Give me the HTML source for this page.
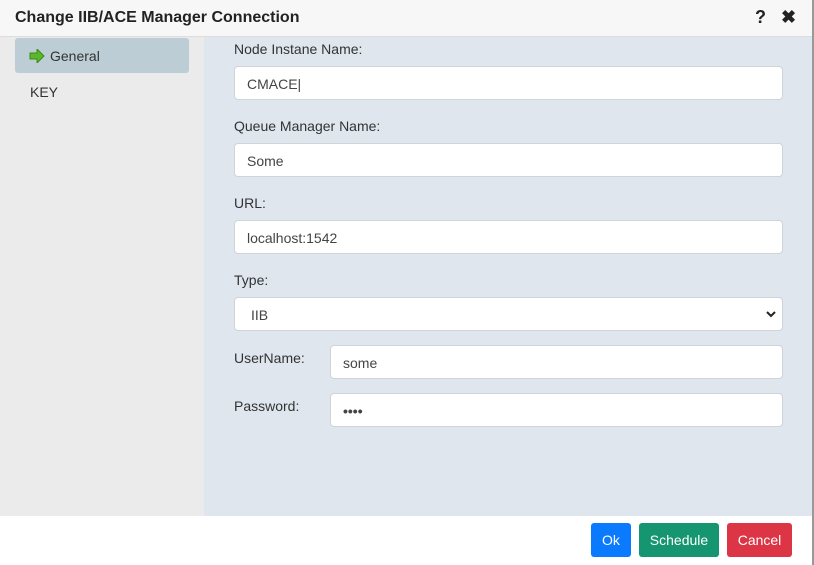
<!DOCTYPE html>
<html><head><style>
*{box-sizing:border-box;margin:0;padding:0}
body{width:814px;height:565px;background:#fff;font-family:"Liberation Sans",sans-serif;position:relative;overflow:hidden;font-size:14px;color:#333}
.hdr{position:absolute;left:0;top:0;width:814px;height:37px;background:#f7f7f7;border-bottom:1px solid #ddd}
.hdr .t{position:absolute;left:15px;top:9px;font-weight:bold;font-size:16px;color:#222}
.hdr .q{position:absolute;left:755px;top:7px;font-weight:bold;font-size:18px;color:#222}
.hdr .x{position:absolute;left:781px;top:7px;font-weight:bold;font-size:18px;color:#222}
.side{position:absolute;left:0;top:37px;width:204px;height:479px;background:#ebebeb}
.sel{position:absolute;left:15px;top:1px;width:174px;height:35px;background:#bccdd6;border-radius:3px}
.sel span{position:absolute;left:35px;top:10px;color:#333}
.key{position:absolute;left:30px;top:47px}
.main{position:absolute;left:204px;top:37px;width:608px;height:479px;background:#dfe6ee}
.rb{position:absolute;left:812px;top:0;width:2px;height:565px;background:#999}
.lb{position:absolute;font-size:14px;color:#333}
.in{position:absolute;background:#fff;border:1px solid #cfd4da;border-radius:4px;height:34px;padding:9px 12px;font-size:14px;color:#444}
.btn{position:absolute;top:523px;height:34px;border-radius:3px;color:#fff;font-size:14px;text-align:center;line-height:34px}
</style></head><body>
<div class="hdr"><span class="t">Change IIB/ACE Manager Connection</span><span class="q">?</span><span class="x">✖</span></div>
<div class="side"><div class="sel"><svg style="position:absolute;left:14px;top:11px" width="16" height="14" viewBox="0 0 16 14"><path d="M1 4h7V0l7 7-7 7v-4H1z" fill="#5cb82a" stroke="#3a8a18" stroke-width="1"/></svg><span>General</span></div><div class="key">KEY</div></div>
<div class="main"></div>
<div class="lb" style="left:234px;top:41px">Node Instane Name:</div>
<div class="in" style="left:234px;top:66px;width:549px">CMACE|</div>
<div class="lb" style="left:234px;top:118px">Queue Manager Name:</div>
<div class="in" style="left:234px;top:143px;width:549px">Some</div>
<div class="lb" style="left:234px;top:195px">URL:</div>
<div class="in" style="left:234px;top:220px;width:549px">localhost:1542</div>
<div class="lb" style="left:234px;top:272px">Type:</div>
<div class="in" style="left:234px;top:297px;width:549px;padding-left:16px">IIB<svg style="position:absolute;right:6px;top:12px" width="10" height="8" viewBox="0 0 10 8"><path d="M1 2l4 4 4-4" fill="none" stroke="#222" stroke-width="2"/></svg></div>
<div class="lb" style="left:234px;top:350px">UserName:</div>
<div class="in" style="left:330px;top:345px;width:453px">some</div>
<div class="lb" style="left:234px;top:398px">Password:</div>
<div class="in" style="left:330px;top:393px;width:453px;font-weight:bold">••••</div>
<div class="btn" style="left:591px;width:40px;background:#0a7bff">Ok</div>
<div class="btn" style="left:639px;width:80px;background:#159570">Schedule</div>
<div class="btn" style="left:727px;width:65px;background:#dc3545">Cancel</div>
<div class="rb"></div>
</body></html>
